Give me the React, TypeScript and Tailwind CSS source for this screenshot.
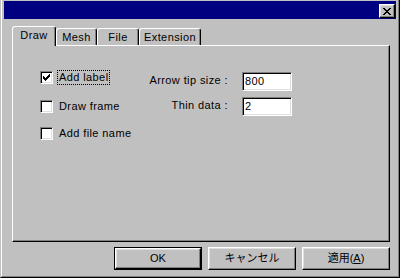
import type { ReactNode } from "react";

const raised =
  "border border-t-white border-l-white border-r-black border-b-black shadow-[inset_-1px_-1px_#808080,inset_1px_1px_#dfdfdf]";
const sunken =
  "border border-t-[#808080] border-l-[#808080] border-r-white border-b-white shadow-[inset_1px_1px_#000,inset_-1px_-1px_#dfdfdf]";

function CheckMark() {
  return (
    <svg width="7" height="7" viewBox="0 0 7 7" shapeRendering="crispEdges">
      <path
        d="M0 2h1v3H0z M1 3h1v3H1z M2 4h1v3H2z M3 3h1v3H3z M4 2h1v3H4z M5 1h1v3H5z M6 0h1v3H6z"
        fill="#000"
      />
    </svg>
  );
}

function CloseGlyph() {
  return (
    <svg width="8" height="7" viewBox="0 0 8 7" shapeRendering="crispEdges">
      <path
        d="M0 0h2v1H0z M6 0h2v1H6z M1 1h2v1H1z M5 1h2v1H5z M2 2h4v1H2z M3 3h2v1H3z M2 4h4v1H2z M1 5h2v1H1z M5 5h2v1H5z M0 6h2v1H0z M6 6h2v1H6z"
        fill="#000"
      />
    </svg>
  );
}

function Checkbox({ checked, label, focused }: { checked?: boolean; label: string; focused?: boolean }) {
  return (
    <div className="flex h-[17px] items-center">
      <div className={`flex h-[13px] w-[13px] items-center justify-center bg-white ${sunken}`}>
        {checked && <CheckMark />}
      </div>
      <span
        className={`ml-[4px] px-[1px] leading-[13px] ${
          focused ? "border border-dotted border-black" : "border border-transparent"
        }`}
      >
        {label}
      </span>
    </div>
  );
}

function Tab({ children, width, active }: { children: ReactNode; width: string; active?: boolean }) {
  return (
    <div
      className={`${width} flex items-center justify-center rounded-t-[3px] border-t border-l border-r border-t-white border-l-white border-r-black shadow-[inset_-1px_0_#808080] bg-[#c0c0c0] ${
        active ? "relative z-10 -mb-px h-[20px] pb-[3px]" : "h-[17px]"
      }`}
    >
      {children}
    </div>
  );
}

function Field({ label, value }: { label: string; value: string }) {
  return (
    <div className="flex h-[19px] items-center">
      <span className="w-[88px] pb-[3px] text-right">{label}</span>
      <div className={`ml-[14px] flex h-[19px] w-[50px] items-center bg-white pl-[2px] ${sunken}`}>
        {value}
      </div>
    </div>
  );
}

function Button({ children, isDefault }: { children: ReactNode; isDefault?: boolean }) {
  if (isDefault) {
    return (
      <div className="h-[23px] w-[88px] border border-black">
        <div className={`flex h-full w-full items-center justify-center ${raised}`}>{children}</div>
      </div>
    );
  }
  return (
    <div className={`flex h-[23px] w-[88px] items-center justify-center ${raised}`}>{children}</div>
  );
}

export default function App() {
  return (
    <div className="h-[278px] w-[400px] border-l border-r border-b border-l-[#c0c0c0] border-r-black border-b-black bg-[#c0c0c0] font-['Liberation_Sans','Noto_Sans_CJK_JP',Arial,sans-serif] text-[11px] tracking-[0.4px] text-black">
      <div className="flex h-full flex-col border-l border-r border-b border-l-white border-r-[#808080] border-b-[#808080] px-[2px] pt-[1px]">
        <div className="flex h-[18px] items-start bg-[#000080]">
          <div className={`ml-auto mr-[1px] mt-[3px] flex h-[14px] w-[16px] items-center justify-center bg-[#c0c0c0] ${raised}`}>
            <CloseGlyph />
          </div>
        </div>

        <div className="ml-[8px] mr-[6px] mt-[7px] flex h-[19px] items-end">
          <Tab width="w-[44px]" active>
            Draw
          </Tab>
          <Tab width="w-[41px]">Mesh</Tab>
          <Tab width="w-[42px]">File</Tab>
          <Tab width="w-[62px]">Extension</Tab>
        </div>

        <div className="ml-[8px] mr-[6px] flex h-[197px] border-t border-l border-r border-b border-t-white border-l-white border-r-black border-b-black shadow-[inset_-1px_-1px_#808080]">
          <div className="flex w-[127px] flex-col pl-[27px] pt-[23px]">
            <Checkbox checked focused label="Add label" />
            <div className="mt-[12px]">
              <Checkbox label="Draw frame" />
            </div>
            <div className="mt-[10px]">
              <Checkbox label="Add file name" />
            </div>
          </div>
          <div className="flex flex-col gap-[6px] pt-[26px]">
            <Field label="Arrow tip size :" value="800" />
            <Field label="Thin data :" value="2" />
          </div>
        </div>

        <div className="mr-[6px] mt-[5px] flex justify-end gap-[6px] tracking-normal">
          <Button isDefault>OK</Button>
          <Button>キャンセル</Button>
          <Button>
            <span>
              適用(<span className="underline">A</span>)
            </span>
          </Button>
        </div>
      </div>
    </div>
  );
}
